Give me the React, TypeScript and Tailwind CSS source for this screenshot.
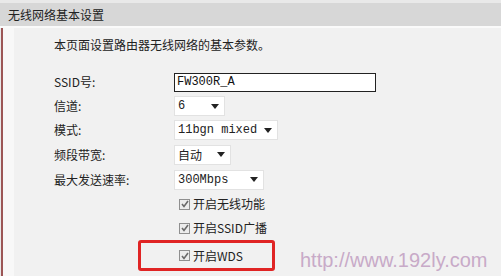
const CJK = '"Noto Sans CJK SC", "Liberation Sans", sans-serif';
const MONO = '"Liberation Mono", "Noto Sans CJK SC", monospace';

function Arrow() {
  return (
    <svg width="8" height="5" viewBox="0 0 8 5" className="shrink-0">
      <path d="M0 0H8L4 5Z" fill="#222" />
    </svg>
  );
}

function Select({ value, width, cjk }: { value: string; width: number; cjk?: boolean }) {
  return (
    <div
      className="flex h-[20px] items-center justify-between border border-[#e2e2e2] bg-white pl-[3px] pr-[5px] text-[12px] text-[#222]"
      style={{ width, fontFamily: cjk ? CJK : MONO }}
    >
      <span>{value}</span>
      <Arrow />
    </div>
  );
}

function Check({ label }: { label: string }) {
  return (
    <div className="flex items-center gap-[3px] text-[12px] text-[#222]">
      <span className="flex h-[11px] w-[11px] items-center justify-center border border-[#8f8f8f] bg-[#ececec]">
        <svg width="8" height="8" viewBox="0 0 8 8">
          <path d="M1 4L3 6.5L7 1" fill="none" stroke="#6a6a6a" strokeWidth="1.6" />
        </svg>
      </span>
      <span>{label}</span>
    </div>
  );
}

function Row({ label, children, h = 24 }: { label: string; children: React.ReactNode; h?: number }) {
  return (
    <div className="flex items-center" style={{ height: h }}>
      <div className="w-[120px] text-[12px] text-[#222]">{label}</div>
      {children}
    </div>
  );
}

export default function App() {
  return (
    <div
      className="relative h-[276px] w-[501px] overflow-hidden bg-[#f1f1f1]"
      style={{ fontFamily: CJK }}
    >
      <div className="h-[3px] bg-[#e9e9e9]" />
      <div className="flex h-[23px] items-center bg-[#d7d7d7] pl-[8px] text-[12px] text-[#222]">
        无线网络基本设置
      </div>
      <div className="h-[2px] bg-[#fafafa]" />
      <div className="flex h-[248px]">
        <div className="w-[1px] bg-[#e8e8e8]" />
        <div className="w-[2px] bg-[#9c5656]" />
        <div className="w-[11px] bg-[#f8f8f8]" />
        <div className="flex-1 pl-[40px]">
          <div className="mt-[7px] flex h-[20px] items-center text-[12px] text-[#222]">
            本页面设置路由器无线网络的基本参数。
          </div>
          <div className="mt-[15px]">
            <Row label="SSID号:">
              <div
                className="flex h-[19px] w-[202px] items-center border border-[#222] bg-white pl-[2px] text-[12px] text-[#111]"
                style={{ fontFamily: MONO }}
              >
                FW300R_A
              </div>
            </Row>
            <Row label="信道:">
              <Select value="6" width={51} />
            </Row>
            <Row label="模式:">
              <Select value="11bgn mixed" width={104} />
            </Row>
            <Row label="频段带宽:" h={25}>
              <Select value="自动" width={57} cjk />
            </Row>
            <Row label="最大发送速率:" h={25}>
              <Select value="300Mbps" width={90} />
            </Row>
            <div className="flex h-[24px] items-center pl-[125px]">
              <Check label="开启无线功能" />
            </div>
            <div className="flex h-[24px] items-center pl-[125px]">
              <Check label="开启SSID广播" />
            </div>
            <div className="ml-[84px] flex h-[31px] w-[137px] items-center rounded-[3px] border-[3px] border-[#e02424] pl-[38px]">
              <Check label="开启WDS" />
            </div>
          </div>
        </div>
      </div>
      <div
        className="absolute left-[300px] top-[250px] text-[20px] leading-none text-[#c8aac8]"
        style={{ fontFamily: '"Liberation Sans", Arial, sans-serif' }}
      >
        http://www.192ly.com
      </div>
    </div>
  );
}
